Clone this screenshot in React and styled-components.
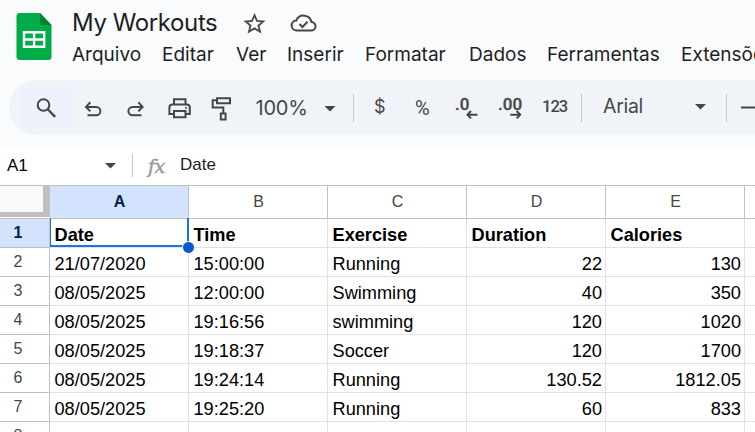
import React from "react";
import styled, { createGlobalStyle } from "styled-components";

const INK = "#444746";

const GlobalStyle = createGlobalStyle`
  * { box-sizing: border-box; }
  body { margin: 0; background: #fff; overflow: hidden; }
  svg { display: block; flex: none; }
`;

const Page = styled.div`
  width: 755px;
  height: 432px;
  overflow: hidden;
  background: #fff;
  color: #000;
  font-family: "Liberation Sans", Arial, sans-serif;
`;

const TopArea = styled.div`
  height: 146px;
  background: #f9fbfd;
`;

const Header = styled.header`
  display: flex;
  height: 80px;
`;

const HeaderText = styled.div`
  flex: none;
  padding-left: 19px;
`;

const TitleRow = styled.div`
  display: flex;
  height: 41px;
`;

const Title = styled.h1`
  margin: 0;
  width: 171px;
  padding-top: 4px;
  font: 400 24px/38px Inter, sans-serif;
  letter-spacing: -0.4px;
  color: #1f1f1f;
  white-space: nowrap;
`;

const Menu = styled.nav`
  display: flex;
`;

const MenuItem = styled.span`
  flex: none;
  width: ${(p) => p.$width}px;
  font: 400 19px/28px Inter, sans-serif;
  color: #1f1f1f;
  white-space: nowrap;
`;

const Toolbar = styled.div`
  display: flex;
  align-items: center;
  height: 55px;
  margin-left: 9px;
  padding-left: 12px;
  border-radius: 28px 0 0 28px;
  background: #f0f4f9;
  overflow: hidden;
  white-space: nowrap;
`;

const SearchButton = styled.div`
  display: flex;
  align-items: center;
  height: 39px;
  background: #edf1fb;
  overflow: hidden;
`;

const ToolText = styled.span`
  flex: none;
  width: ${(p) => p.$width}px;
  padding-left: ${(p) => p.$pad || 0}px;
  padding-bottom: ${(p) => p.$lift || 0}px;
  font: ${(p) => p.$weight || 400} ${(p) => p.$size}px/24px ${(p) => p.$face || "Inter"}, sans-serif;
  letter-spacing: ${(p) => p.$spacing || 0}px;
  color: ${INK};
`;

const Decimal = styled.span`
  flex: none;
  width: ${(p) => p.$width}px;
  height: 55px;
  padding-top: 14px;
  font: 500 17px/20px Roboto, sans-serif;
  color: ${INK};
  -webkit-text-stroke: 0.3px ${INK};

  svg {
    margin-top: -5px;
  }
`;

const Divider = styled.i`
  flex: none;
  width: 1px;
  height: ${(p) => p.$height}px;
  background: #c7c7c7;
`;

const FormulaBar = styled.div`
  display: flex;
  align-items: center;
  height: 39px;
  font-size: 17px;
  color: #1f1f1f;
`;

const NameBox = styled.span`
  width: 98px;
  padding-left: 7px;
  color: #000;
`;

const Fx = styled.span`
  width: 47px;
  padding-left: 15px;
  font: italic 400 19px/28px "DejaVu Serif", serif;
  letter-spacing: -0.5px;
  color: #9a9a9a;
  -webkit-text-stroke: 0.5px #9a9a9a;
`;

const FormulaValue = styled.span`
  padding-bottom: 2px;
`;

const Grid = styled.div`
  display: grid;
  grid-template-columns: 50px repeat(5, 139px) 139px;
  grid-template-rows: 33px repeat(8, 29px);
  border-top: 1px solid #c0c0c0;
`;

const Corner = styled.div`
  height: 31px;
  background: #f8f9fa;
  border-right: 7px solid #c0c0c0;
  border-bottom: 5px solid #c0c0c0;
`;

const CornerCell = styled.div`
  height: 33px;
  border-bottom: 1px solid #c0c0c0;
`;

const ColumnHead = styled.div`
  height: 33px;
  padding-left: 1px;
  border-right: 1px solid #c0c0c0;
  border-bottom: 1px solid #c0c0c0;
  background: ${(p) => (p.$active ? "#d3e3fd" : "#fff")};
  color: ${(p) => (p.$active ? "#041e49" : INK)};
  font-weight: ${(p) => (p.$active ? 700 : 400)};
  font-size: 16px;
  line-height: 32px;
  text-align: center;
`;

const RowHead = styled.div`
  padding-right: 13px;
  border-right: 1px solid #c0c0c0;
  border-bottom: 1px solid #c0c0c0;
  background: ${(p) => (p.$active ? "#d3e3fd" : "#fff")};
  color: ${(p) => (p.$active ? "#041e49" : INK)};
  font-weight: ${(p) => (p.$active ? 700 : 400)};
  font-size: 16px;
  line-height: 28px;
  text-align: center;
`;

const Cell = styled.div`
  position: relative;
  padding: 2px 3px 0 4.5px;
  border-right: 1px solid #e1e1e1;
  border-bottom: 1px solid #e1e1e1;
  font-size: 18.2px;
  font-weight: ${(p) => (p.$head ? 700 : 400)};
  line-height: 28px;
  text-align: ${(p) => (p.$right ? "right" : "left")};
  white-space: nowrap;
`;

const Selection = styled.div`
  position: absolute;
  inset: -1px -1px 0 0;
  border: 2px solid #1a73e8;
  border-width: 0 2px 2px 1px;
`;

const FillHandle = styled.div`
  position: absolute;
  z-index: 1;
  right: -7px;
  bottom: -7px;
  width: 13px;
  height: 13px;
  border: 1px solid #fff;
  border-radius: 50%;
  background: #0b57d0;
`;

const Stroke = ({ x, y = 80, w, h = 55, width = 2, children }) => (
  <svg width={w} height={h} viewBox={`${x} ${y} ${w} ${h}`} fill="none" stroke={INK} strokeWidth={width}>
    {children}
  </svg>
);

const Caret = ({ w, h, x, y }) => (
  <svg width={w} height={h} viewBox={`0 0 ${w} ${h}`}>
    <path d={`M${x} ${y}h11l-5.5 5.5z`} fill={INK} />
  </svg>
);

const Logo = () => (
  <svg width="53" height="80" viewBox="0 0 53 80">
    <path d="M19.500 13H40l11.500 12v32a3 3 0 0 1-3 3h-29a3 3 0 0 1-3-3V16a3 3 0 0 1 3-3z" fill="#00ac47" />
    <path d="M40 13l11.500 12H40z" fill="#00832d" />
    <path d="M24 32.300h20.200v14.400H24z" fill="none" stroke="#fff" strokeWidth="2.400" />
    <path d="M34.100 32v15M24 39.500h20" stroke="#fff" strokeWidth="2.400" />
  </svg>
);

const menu = [
  ["Arquivo", 90],
  ["Editar", 74],
  ["Ver", 51],
  ["Inserir", 78],
  ["Formatar", 104],
  ["Dados", 78],
  ["Ferramentas", 134],
  ["Extensões", 100],
];

const rows = [
  ["Date", "Time", "Exercise", "Duration", "Calories", ""],
  ["21/07/2020", "15:00:00", "Running", "22", "130", ""],
  ["08/05/2025", "12:00:00", "Swimming", "40", "350", ""],
  ["08/05/2025", "19:16:56", "swimming", "120", "1020", ""],
  ["08/05/2025", "19:18:37", "Soccer", "120", "1700", ""],
  ["08/05/2025", "19:24:14", "Running", "130.52", "1812.05", ""],
  ["08/05/2025", "19:25:20", "Running", "60", "833", ""],
  ["", "", "", "", "", ""],
];

export default function App() {
  return (
    <Page>
      <GlobalStyle />
      <TopArea>
        <Header>
          <Logo />
          <HeaderText>
            <TitleRow>
              <Title>My Workouts</Title>
              <Stroke x={243} y={0} w={46} h={41} width={1.8}>
                <path d="M254.500 15.200l2.500 5.800 6.300.5-4.800 4.100 1.500 6.100-5.500-3.300-5.500 3.300 1.500-6.100-4.800-4.100 6.300-.5z" />
              </Stroke>
              <Stroke x={289} y={0} w={40} h={41} width={2}>
                <path d="M297 30.500h14a4.200 4.200 0 0 0 .5-8.500 8 8 0 0 0-15.200-1.500 5 5 0 0 0 .7 10z" />
                <path d="M299.500 24l3 3 5-5.200" />
              </Stroke>
            </TitleRow>
            <Menu>
              {menu.map(([label, width]) => (
                <MenuItem key={label} $width={width}>{label}</MenuItem>
              ))}
            </Menu>
          </HeaderText>
        </Header>
        <Toolbar>
          <SearchButton>
            <Stroke x={21} w={51}>
              <circle cx="43.500" cy="105" r="5.800" />
              <path d="M47.700 109.300l7.500 7.600" strokeWidth="2.300" />
            </Stroke>
          </SearchButton>
          <Stroke x={72} w={42}>
            <path d="M90.300 102.300L86 106.900l4.300 4.500M86.500 106.900H96.200a4.200 4.200 0 0 1 0 8.400H87.500" />
          </Stroke>
          <Stroke x={114} w={43}>
            <path d="M138.300 102.300l4.300 4.600-4.300 4.500M142.300 106.900H132.600a4.200 4.200 0 0 0 0 8.400H141.500" />
          </Stroke>
          <Stroke x={157} w={43}>
            <path d="M174 104.500v-5.200h11.500v5.200M174 114h-4.600v-6.500a3 3 0 0 1 3-3h14.400a3 3 0 0 1 3 3v6.500h-4.300" />
            <path d="M174 111h11.500v6.300H174z" />
            <circle cx="186" cy="108" r="1" fill={INK} stroke="none" />
          </Stroke>
          <Stroke x={200} w={43}>
            <path d="M217 98.200h13v5.100h-13zM217 100.300h-4.300v7.300h10.600v5.500M220.800 113.500h4.800v6.100h-4.800z" />
          </Stroke>
          <ToolText $width={81} $pad={12.5} $size={20} $spacing={-0.2}>100%</ToolText>
          <Caret w={29} h={55} x={0.5} y={26} />
          <Divider $height={28} />
          <ToolText $width={41} $pad={20} $size={18} $lift={1}>$</ToolText>
          <ToolText $width={60} $pad={20} $size={20} $face="Roboto" $spacing={0}>%</ToolText>
          <Decimal $width={43}>
            .0
            <Stroke x={455} y={109} w={30} h={12}>
              <path d="M471 111l-3.500 3.700 3.500 3.700M468 114.700h9.500" />
            </Stroke>
          </Decimal>
          <Decimal $width={44}>
            .00
            <Stroke x={498} y={109} w={30} h={12}>
              <path d="M516.700 111l3.500 3.700-3.500 3.700M519.700 114.700h-9.500" />
            </Stroke>
          </Decimal>
          <ToolText $width={39} $size={16.500} $weight={500} $face="Roboto" $spacing={-1} $lift={2}>123</ToolText>
          <Divider $height={28} />
          <ToolText $width={112} $pad={21} $size={19.500} $spacing={-0.3} $lift={3}>Arial</ToolText>
          <Caret w={32} h={55} x={1} y={24} />
          <Divider $height={28} />
          <Stroke x={727} w={28}>
            <path d="M741 107.500h14" />
          </Stroke>
        </Toolbar>
      </TopArea>
      <FormulaBar>
        <NameBox>A1</NameBox>
        <Caret w={34} h={39} x={7} y={17} />
        <Divider $height={23} />
        <Fx>fx</Fx>
        <FormulaValue>Date</FormulaValue>
      </FormulaBar>
      <Grid>
        <CornerCell><Corner /></CornerCell>
        {["A", "B", "C", "D", "E", ""].map((c, i) => (
          <ColumnHead key={i} $active={i === 0}>{c}</ColumnHead>
        ))}
        {rows.map((row, r) => (
          <React.Fragment key={r}>
            <RowHead $active={r === 0}>{r + 1}</RowHead>
            {row.map((value, c) => (
              <Cell key={c} $head={r === 0} $right={r > 0 && c > 2}>
                {value}
                {r === 0 && c === 0 && <><Selection /><FillHandle /></>}
              </Cell>
            ))}
          </React.Fragment>
        ))}
      </Grid>
    </Page>
  );
}
